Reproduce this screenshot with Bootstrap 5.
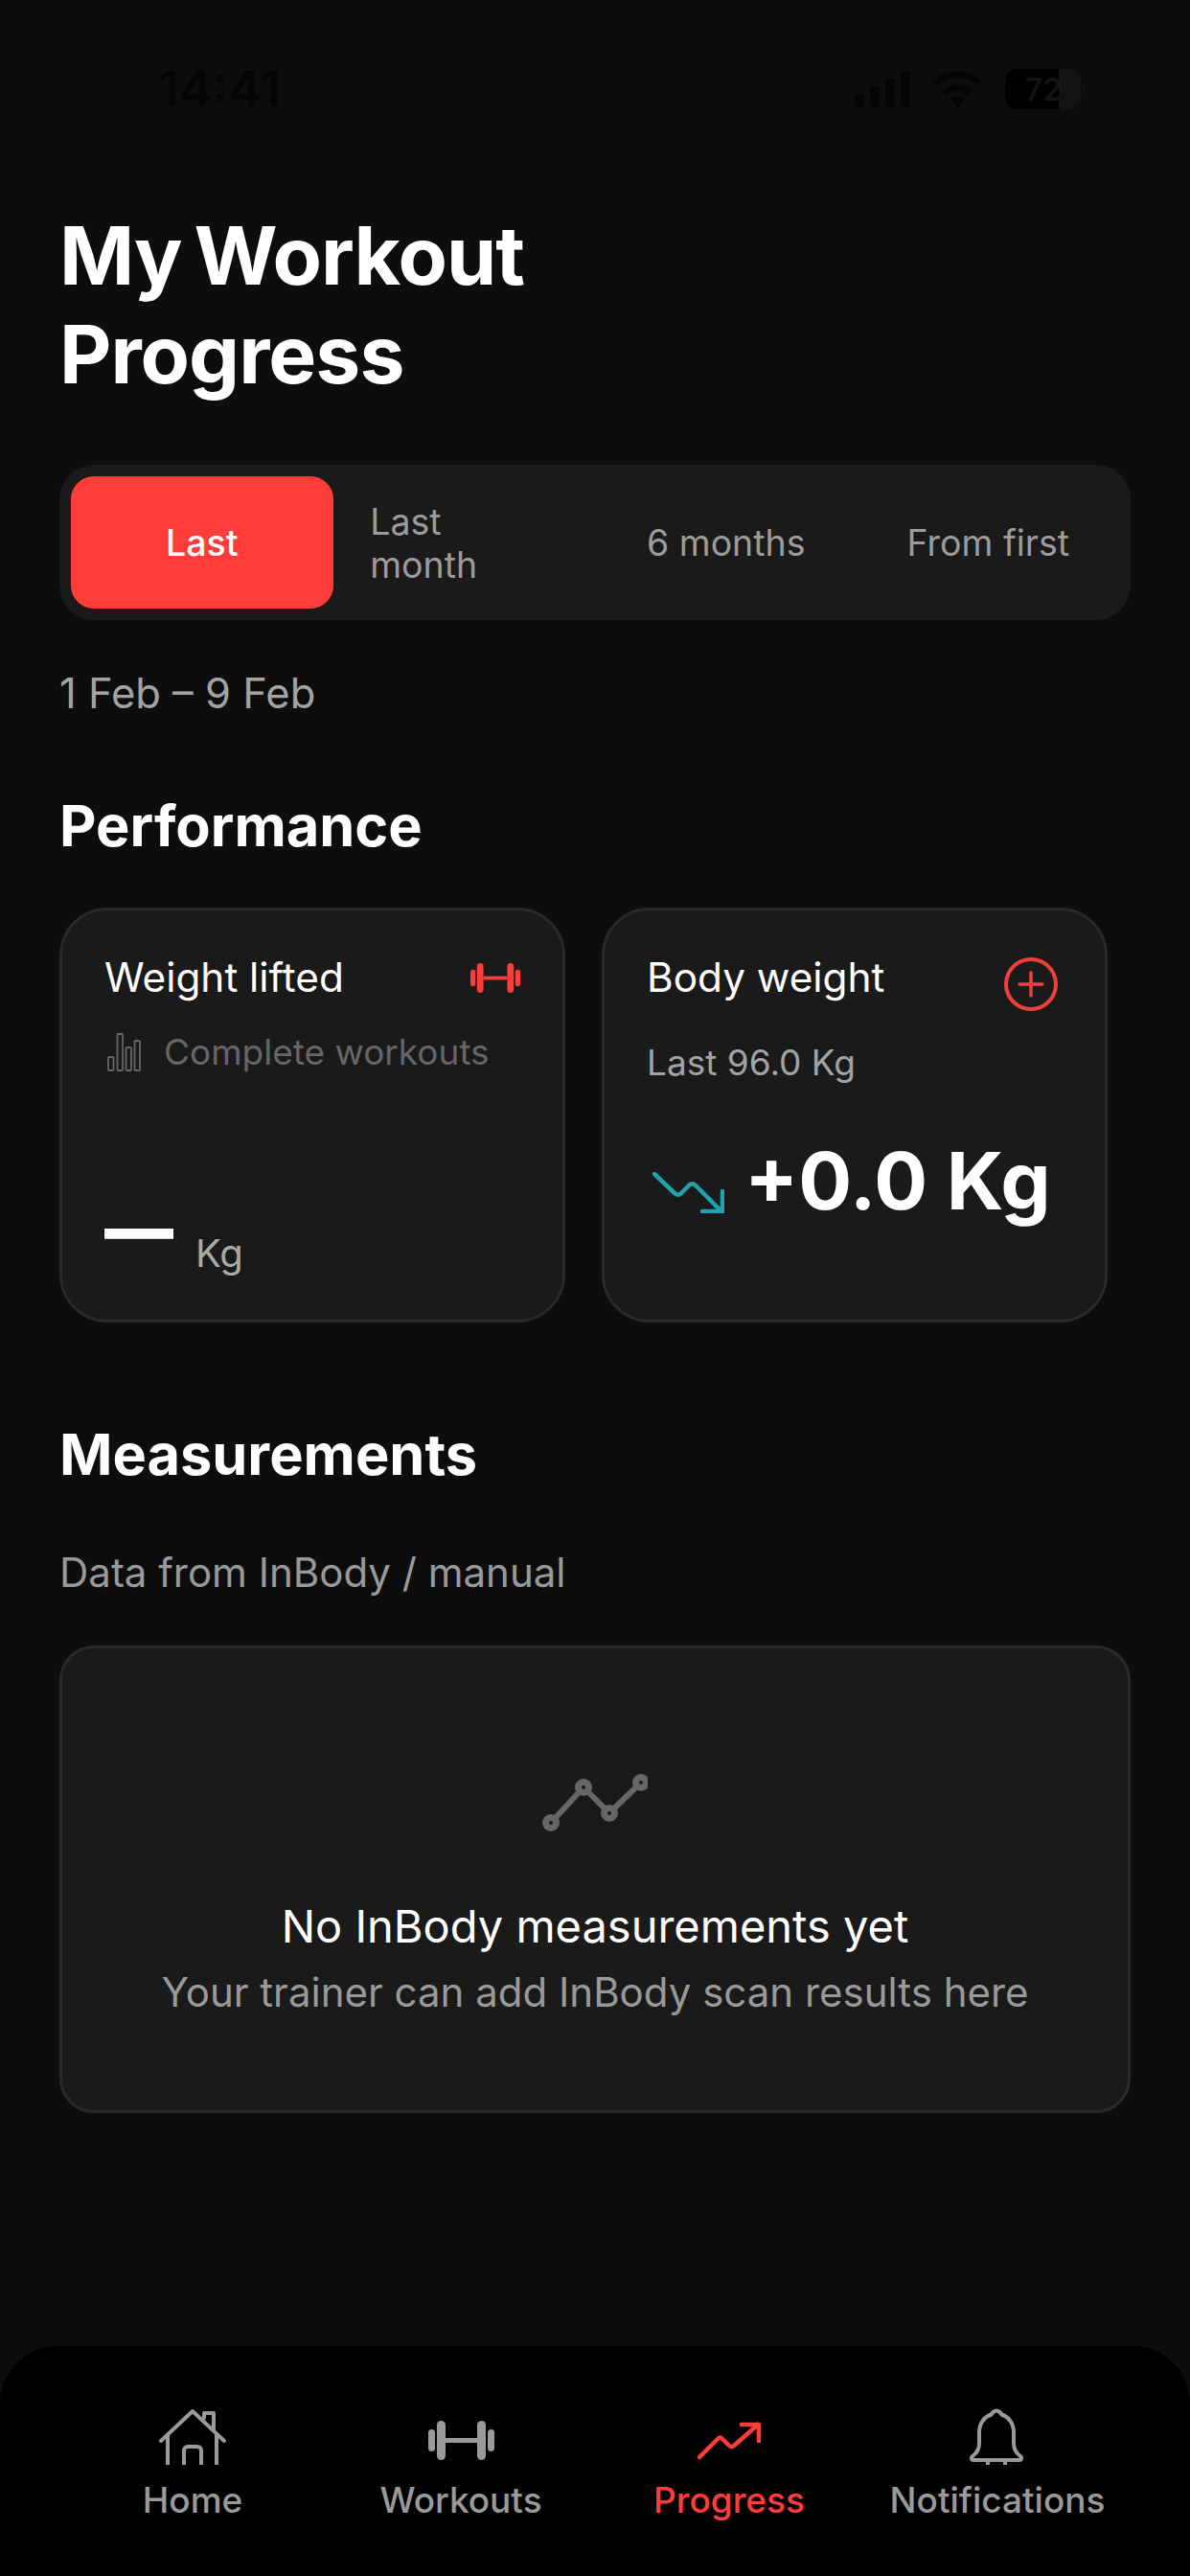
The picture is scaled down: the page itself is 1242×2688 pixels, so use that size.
<!DOCTYPE html>
<html lang="en">
<head>
<meta charset="utf-8">
<title>My Workout Progress</title>
<link href="https://cdn.jsdelivr.net/npm/bootstrap@5.3.0/dist/css/bootstrap.min.css" rel="stylesheet">
<style>
html,body{margin:0;background:#0d0d0d}
body{font-family:Inter,"Liberation Sans",sans-serif;color:#fff}
.screen{width:1242px;height:2688px;background:#0d0d0d;overflow:hidden}
.status-row{height:215px;padding:72px 109px 0 165px}
.clock{font-size:52px;line-height:42px;font-weight:600;color:#050505}
.status-icons{gap:23px;height:42px}
.status-icons svg{display:block}
.body-area{padding:0 62px}
.page-title{font-size:84px;line-height:103px;font-weight:700;letter-spacing:-1px;word-spacing:-6px;margin:0 0 64px}
.seg{height:162px;background:#1a1a1a;border-radius:36px;padding:12px;}
.seg-item{flex:1 1 0;display:flex;align-items:center;justify-content:center;font-size:37.500px;line-height:45px;color:#9c9c9c;border-radius:24px}
.seg-on{background:#ff3d38;color:#fff;font-weight:500}
.seg-wrap{width:196px;padding-top:2px}
.date-line{font-size:43.500px;line-height:48px;color:#a3a3a3;margin:52px 0 0}
.sec-title{font-size:59.500px;line-height:68px;font-weight:700;margin:0}
.perf-title{margin-top:80px}
.card-row{margin-top:52px;gap:38px;width:1118px}
.tile{width:528px;height:433px;flex:none;background:#1a1a1a;border:3px solid #2a2a2a;border-radius:50px;padding:44px 44px 45px}
.tile-head{height:52px;font-size:42.300px;line-height:52px}
.dim-row{margin-top:30px;font-size:37px;line-height:44px;color:#666;gap:24px}
.dim-row svg{margin-left:3px}
.big-dash{display:block;width:71px;font-size:72px;line-height:48px;font-weight:900;color:#fff;margin-bottom:26px}
.unit{font-size:40px;line-height:48px;color:#aaa;margin-left:24px}
.last-line{margin-top:42px;font-size:37px;line-height:42px;color:#a3a3a3}
.value-row{margin-top:53px;gap:21px}
.value-text{font-size:83px;line-height:98px;font-weight:700;white-space:nowrap}
.arrow-ic{margin-top:24px;margin-left:6px;flex:none}
.plus-ic{margin-top:5px;margin-right:5px;flex:none}
.meas-title{margin-top:103px}
.data-line{font-size:42px;line-height:48px;color:#999;margin:66px 0 0}
.empty-panel{margin-top:52px;height:488px;background:#1a1a1a;border:3px solid #2a2a2a;border-radius:36px;padding-top:130px;text-align:center}
.empty-panel svg{display:block;margin:0 auto 72px}
.empty-main{font-size:47px;line-height:52px;margin:0}
.empty-sub{font-size:42px;line-height:48px;color:#999;margin:19px 0 0}
.tabbar{margin-top:auto;height:240px;background:#000;border-radius:60px 60px 0 0;padding:64px 61px 0}
.tab-cell{flex:1 1 0;display:flex;flex-direction:column;align-items:center;font-size:37px;line-height:44px;color:#9a9a9a;font-weight:500}
.tab-cell svg{display:block;margin-bottom:11px}
.tab-on{color:#ff3d38}
</style>
</head>
<body>
<div class="screen d-flex flex-column">
  <div class="status-row d-flex justify-content-between align-items-start flex-shrink-0">
    <div class="clock">14:41</div>
    <div class="status-icons d-flex align-items-center">
      <svg width="58" height="38" viewBox="0 0 58 38" fill="#050505"><rect x="0" y="24" width="10" height="14" rx="3"/><rect x="16" y="16" width="10" height="22" rx="3"/><rect x="32" y="8" width="10" height="30" rx="3"/><rect x="48" y="0" width="10" height="38" rx="3"/></svg>
      <svg width="53" height="38" viewBox="0 0 53 38" fill="none" stroke="#050505" stroke-width="7"><path d="M3 13C16 1 37 1 50 13"/><path d="M13 23c8-7 19-7 27 0"/><path d="M26.500 38l-8-9c5-3 11-3 16 0z" fill="#050505" stroke="none"/></svg>
      <svg width="84" height="42" viewBox="0 0 84 42"><rect x="0" y="0" width="79" height="42" rx="13" fill="#131313"/><path d="M13 0h43v42H13A13 13 0 0 1 0 29V13A13 13 0 0 1 13 0z" fill="#000"/><path d="M81 15c2 1 3 3 3 6s-1 5-3 6z" fill="#131313"/><text x="40" y="33" text-anchor="middle" font-family="Inter,sans-serif" font-size="32" font-weight="600" fill="#141414">72</text></svg>
    </div>
  </div>
  <div class="body-area">
    <h1 class="page-title">My Workout<br>Progress</h1>
    <div class="seg d-flex">
      <div class="seg-item seg-on">Last</div>
      <div class="seg-item"><span class="seg-wrap">Last<br>month</span></div>
      <div class="seg-item">6 months</div>
      <div class="seg-item">From first</div>
    </div>
    <p class="date-line">1 Feb – 9 Feb</p>
    <h2 class="sec-title perf-title">Performance</h2>
    <div class="card-row d-flex">
      <div class="tile d-flex flex-column">
        <div class="tile-head d-flex justify-content-between align-items-center">
          <span>Weight lifted</span>
          <svg width="52" height="31" viewBox="6 14 69 41" fill="#ff3d38"><rect x="6" y="23" width="7" height="23" rx="3.500"/><rect x="15" y="14" width="9" height="41" rx="4.500"/><rect x="24" y="32" width="33" height="5"/><rect x="57" y="14" width="9" height="41" rx="4.500"/><rect x="68" y="23" width="7" height="23" rx="3.500"/></svg>
        </div>
        <div class="dim-row d-flex align-items-center">
          <svg width="35" height="40" viewBox="0 0 35 40" fill="none" stroke="#666" stroke-width="1.800"><rect x="1" y="25" width="5.500" height="14" rx="1"/><rect x="10.500" y="1" width="5.500" height="38" rx="1"/><rect x="19.500" y="15" width="5.500" height="24" rx="1"/><rect x="28.500" y="8" width="5.500" height="31" rx="1"/></svg>
          <span>Complete workouts</span>
        </div>
        <div class="mt-auto d-flex align-items-end">
          <span class="big-dash">—</span><span class="unit">Kg</span>
        </div>
      </div>
      <div class="tile">
        <div class="tile-head d-flex justify-content-between align-items-start">
          <span>Body weight</span>
          <svg class="plus-ic" width="56" height="56" viewBox="0 0 56 56" fill="none" stroke="#f0403a"><circle cx="28" cy="28" r="26" stroke-width="4"/><path d="M28 16v24M16 28h24" stroke-width="3.500" stroke-linecap="round"/></svg>
        </div>
        <div class="last-line">Last 96.0 Kg</div>
        <div class="value-row d-flex align-items-center">
          <svg class="arrow-ic" width="75" height="43" viewBox="0 0 75 43" fill="none" stroke="#21a3ad" stroke-width="4.500" stroke-linecap="round" stroke-linejoin="round"><path d="M2 2l21 20c2 2 4 2 6 1l10-10c2-1 4-1 6 1l28 28"/><path d="M52 41h21V20"/></svg>
          <span class="value-text">+0.0 Kg</span>
        </div>
      </div>
    </div>
    <h2 class="sec-title meas-title">Measurements</h2>
    <p class="data-line">Data from InBody / manual</p>
    <div class="empty-panel">
      <svg width="110" height="62" viewBox="0 0 110 62" fill="#666"><path d="M9 52L43 15 70 42 103 10" fill="none" stroke="#666" stroke-width="6"/><circle cx="9" cy="52" r="9"/><circle cx="43" cy="15" r="9"/><circle cx="70" cy="42" r="9"/><circle cx="103" cy="10" r="9"/><circle cx="9" cy="52" r="2" fill="#1a1a1a"/><circle cx="43" cy="15" r="2" fill="#1a1a1a"/><circle cx="70" cy="42" r="2" fill="#1a1a1a"/><circle cx="103" cy="10" r="2" fill="#1a1a1a"/></svg>
      <p class="empty-main">No InBody measurements yet</p>
      <p class="empty-sub">Your trainer can add InBody scan results here</p>
    </div>
  </div>
  <nav class="tabbar d-flex flex-shrink-0">
    <div class="tab-cell">
      <svg width="80" height="64" viewBox="0 0 80 64" fill="none" stroke="#9a9a9a" stroke-width="4" stroke-linecap="round" stroke-linejoin="round"><path d="M7 35L40 4l33 31"/><path d="M14 28v32M65 28v32" stroke-linecap="butt"/><path d="M31 60V45a4 4 0 0 1 4-4h10a4 4 0 0 1 4 4v15" stroke-linecap="butt"/><path d="M52 11V6h10v17"/></svg>
      <span>Home</span>
    </div>
    <div class="tab-cell">
      <svg width="80" height="64" viewBox="0 0 80 64" fill="#9a9a9a"><rect x="6" y="23" width="7" height="23" rx="3.500"/><rect x="15" y="14" width="9" height="41" rx="4.500"/><rect x="24" y="32" width="33" height="5"/><rect x="57" y="14" width="9" height="41" rx="4.500"/><rect x="68" y="23" width="7" height="23" rx="3.500"/></svg>
      <span>Workouts</span>
    </div>
    <div class="tab-cell tab-on">
      <svg width="80" height="64" viewBox="0 0 80 64" fill="none" stroke="#ff3d38" stroke-width="4.500" stroke-linecap="round" stroke-linejoin="round"><path d="M9 52L28 33c2-2 3-2 5 0l6 6c2 2 4 3 6 1l25-22"/><path d="M53 18h18v17"/></svg>
      <span>Progress</span>
    </div>
    <div class="tab-cell">
      <svg width="80" height="64" viewBox="0 0 80 64" fill="none" stroke="#9a9a9a" stroke-width="4" stroke-linejoin="round"><path d="M39 3.500c-3 0-4 2-5.500 4C26 10 21 17 21 26v12c0 6-3 10-7 13-2 2-1 4 1 4h48c2 0 3-2 1-4-4-3-7-7-7-13V26c0-9-5-16-12.500-18.500C43 5.500 42 3.500 39 3.500z"/><path d="M30 55v5M48 55v5"/></svg>
      <span>Notifications</span>
    </div>
  </nav>
</div>
<script src="https://cdn.jsdelivr.net/npm/bootstrap@5.3.0/dist/js/bootstrap.bundle.min.js"></script>
</body>
</html>
